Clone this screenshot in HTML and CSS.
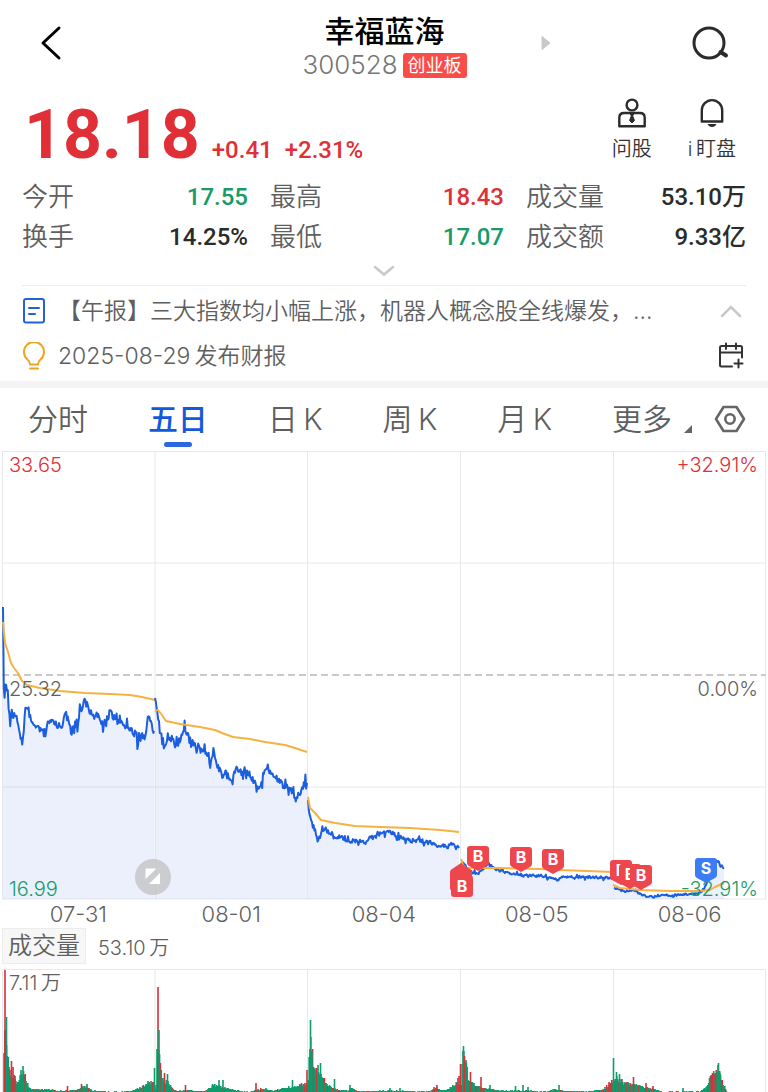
FILE: index.html
```html
<!DOCTYPE html>
<html lang="zh-CN">
  <head>
    <meta charset="UTF-8" />
    <meta name="viewport" content="width=device-width, initial-scale=1.0" />
    <title>幸福蓝海 300528</title>
    <link rel="stylesheet" href="styles.css">
  </head>
  <body>
    <header class="header">
      <button class="icon-btn" aria-label="返回">
        <svg width="22" height="36" viewBox="0 0 22 36"><path d="M19 3 3 18l16 15" fill="none" stroke="#000" stroke-width="3" stroke-linecap="round" stroke-linejoin="round"/></svg>
      </button>
      <div class="stock">
        <h1 class="stock__name">幸福蓝海</h1>
        <div class="stock__code">300528<span class="stock__board">创业板</span></div>
      </div>
      <div class="header__right">
        <button class="icon-btn" aria-label="下一只">
          <svg width="10" height="16" viewBox="0 0 10 16"><path d="M1 1.500 9 8l-8 6.500z" fill="#c8c8c8" stroke="#c8c8c8" stroke-linejoin="round"/></svg>
        </button>
        <button class="icon-btn" aria-label="搜索">
          <svg width="38" height="36" viewBox="0 0 38 36"><circle cx="18" cy="18" r="15" fill="none" stroke="#2b2b2b" stroke-width="3"/><path d="m29.500 27 5.500 3.500" stroke="#2b2b2b" stroke-width="4" stroke-linecap="round"/></svg>
        </button>
      </div>
    </header>

    <section class="quote">
      <div class="quote__price">
        <span class="quote__now">18.18</span>
        <span class="quote__change">+0.41</span>
        <span class="quote__change">+2.31%</span>
      </div>
      <div class="quote__actions">
        <button class="action">
          <svg width="30" height="32" viewBox="0 0 30 32" fill="none" stroke="#2b2b2b" stroke-width="2.400"><circle cx="15" cy="8" r="5.400"/><path d="M2.300 29.200v-8.500q0-4.700 4.700-4.700h16q4.700 0 4.700 4.700v8.500z" stroke-linejoin="round"/><path d="M13.500 17h3l-.8 2 1.800 4.500-2.500 2.500-2.500-2.500 1.800-4.500z" fill="#2b2b2b" stroke-width="1"/></svg>
          问股
        </button>
        <button class="action">
          <svg width="30" height="32" viewBox="0 0 30 32" fill="none" stroke="#2b2b2b" stroke-width="2.400"><path d="M4.800 24.500V13.300a10.200 10.200 0 0 1 20.400 0v11.200z" stroke-linejoin="round"/><path d="M10.500 27h9q-1.500 3-4.500 3t-4.500-3z" fill="#2b2b2b" stroke="none"/></svg>
          i&thinsp;盯盘
        </button>
      </div>
    </section>

    <dl class="stats">
      <div class="stat"><dt>今开</dt><dd class="down">17.55</dd></div>
      <div class="stat"><dt>最高</dt><dd class="up">18.43</dd></div>
      <div class="stat"><dt>成交量</dt><dd>53.10万</dd></div>
      <div class="stat"><dt>换手</dt><dd>14.25%</dd></div>
      <div class="stat"><dt>最低</dt><dd class="down">17.07</dd></div>
      <div class="stat"><dt>成交额</dt><dd>9.33亿</dd></div>
    </dl>
    <button class="icon-btn expand" aria-label="展开">
      <svg width="22" height="12" viewBox="0 0 22 12"><path d="m2 2 9 7.500L20 2" fill="none" stroke="#c8c8c8" stroke-width="2.500" stroke-linecap="round"/></svg>
    </button>

    <section class="news">
      <div class="news__row">
        <svg width="24" height="28" viewBox="0 0 24 28" fill="none" stroke="#2461d9" stroke-width="2"><rect x="2" y="2" width="20" height="23.500" rx="2"/><path d="M7 11h10M7 17h6" stroke-linecap="round"/></svg>
        <a class="news__text" href="#">【午报】三大指数均小幅上涨，机器人概念股全线爆发，…</a>
        <button class="icon-btn" aria-label="收起">
          <svg width="24" height="14" viewBox="0 0 24 14"><path d="m3 12 9-9 9 9" fill="none" stroke="#c8c8c8" stroke-width="2.500" stroke-linecap="round"/></svg>
        </button>
      </div>
      <div class="news__row">
        <svg width="24" height="28" viewBox="0 0 24 28" fill="none" stroke="#f0a520" stroke-width="2"><path d="M8 22.500q0-3-2.500-5a10 10 0 1 1 13 0q-2.500 2-2.500 5z" stroke-linejoin="round"/><path d="M8 26.500h8" stroke-linecap="round"/></svg>
        <a class="news__text" href="#">2025-08-29&thinsp;发布财报</a>
        <button class="icon-btn" aria-label="加入日历">
          <svg width="26" height="28" viewBox="0 0 26 28" fill="none" stroke="#333" stroke-width="2" stroke-linecap="round"><path d="M14 24.500H3.500q-1.500 0-1.500-1.500V5.500Q2 4 3.500 4h19Q24 4 24 5.500v10M2 10.500h22M8 1.500V7M18 1.500V7M20.500 17.500v8M16.500 21.500h8"/></svg>
        </button>
      </div>
    </section>

    <nav class="tabs">
      <button class="tab">分时</button>
      <button class="tab tab--active">五日</button>
      <button class="tab">日&thinsp;K</button>
      <button class="tab">周&thinsp;K</button>
      <button class="tab">月&thinsp;K</button>
      <div class="tabs__more">
        <button class="tab">更多</button>
        <svg class="tabs__corner" width="8" height="8" viewBox="0 0 8 8"><path d="M8 0v8H0z" fill="#666"/></svg>
        <button class="icon-btn" aria-label="设置">
          <svg width="32" height="30" viewBox="0 0 32 30" fill="none" stroke="#666" stroke-width="2.600"><path d="M9.500 3h13L30 15l-7.500 12h-13L2 15z" stroke-linejoin="round"/><circle cx="16" cy="15" r="4.700"/></svg>
        </button>
      </div>
    </nav>

    <main>
      <svg class="chart" viewBox="0 0 768 450">
        <g class="grid">
          <path d="M2.500 1.500h763v447.500H2.500zM155 1v448M307.500 1v448M460.500 1v448M613.500 1v448M2 113h764M2 337h764"/>
        </g>
        <path class="zero" d="M2 225h764"/>
        <g id="priceLines"></g>
        <g class="axis">
          <text class="up" x="9" y="22">33.65</text>
          <text x="9" y="246">25.32</text>
          <text class="down" x="9" y="446">16.99</text>
          <text class="up" x="758" y="22" text-anchor="end">+32.91%</text>
          <text x="758" y="246" text-anchor="end">0.00%</text>
          <text class="down" x="758" y="446" text-anchor="end">-32.91%</text>
        </g>
        <g>
          <circle cx="153" cy="427" r="18" fill="#bdbdbd" fill-opacity=".7"/>
          <path d="M145.500 418.500h11l-11 10.500zM160 423v11h-11z" fill="#fff"/>
        </g>
        <g id="marks" class="marks"></g>
      </svg>
      <div class="dates">
        <span>07-31</span>
        <span>08-01</span>
        <span>08-04</span>
        <span>08-05</span>
        <span>08-06</span>
      </div>
      <div class="volume-head">
        <button class="volume-head__btn">成交量</button>
        <span>53.10&thinsp;万</span>
      </div>
      <svg class="chart" viewBox="0 0 768 124">
        <g class="grid">
          <path d="M2.500 124V1.500h763V124M155 1v123M307.500 1v123M460.500 1v123M613.500 1v123"/>
        </g>
        <g id="volumeBars"></g>
        <g class="axis"><text x="9" y="22">7.11&thinsp;万</text></g>
      </svg>
    </main>
    <script src="chart.js"></script>
  </body>
</html>
```
FILE: styles.css
```css
* {
  box-sizing: border-box;
}

body {
  margin: 0;
  background: #fff;
  color: #5f5f5f;
  font-family: Inter, "Noto Sans CJK SC", sans-serif;
  font-weight: 350;
}

button {
  margin: 0;
  padding: 0;
  border: none;
  background: none;
  color: inherit;
  font: inherit;
  cursor: pointer;
}

svg {
  display: block;
  flex: none;
}

a {
  color: inherit;
  text-decoration: none;
}

.up {
  color: #dd3038;
  fill: #dd3038;
}

.down {
  color: #169c68;
  fill: #169c68;
}

/* header */
.header {
  display: grid;
  grid-template-columns: 1fr auto 1fr;
  align-items: center;
  padding: 13px 39px 0 40px;
}

.header > .icon-btn {
  justify-self: start;
}

.header__right {
  display: flex;
  align-items: center;
  justify-content: space-between;
  padding-left: 74px;
}

.icon-btn {
  display: flex;
  align-items: center;
  justify-content: center;
}

.header .icon-btn {
  margin-bottom: 8px;
}

.stock {
  text-align: center;
}

.stock__name {
  margin: 0;
  color: #000;
  font-size: 30px;
  font-weight: 500;
  line-height: 36px;
}

.stock__code {
  display: flex;
  align-items: center;
  justify-content: center;
  gap: 5px;
  color: #777;
  font-size: 26px;
  line-height: 32px;
}

.stock__board {
  padding: 0 5px;
  border-radius: 3px;
  background: #fb4d48;
  color: #fff;
  font-size: 18px;
  font-weight: 400;
  line-height: 25px;
}

/* price */
.quote {
  display: flex;
  justify-content: space-between;
  height: 96px;
  padding: 10px 32px 0 24px;
}

.quote__price {
  display: flex;
  align-items: baseline;
  gap: 12px;
  color: #e02f36;
  font-family: Roboto, sans-serif;
  font-weight: 500;
}

.quote__now {
  font-size: 68px;
  font-weight: 700;
  line-height: 88px;
}

.quote__change {
  font-size: 24px;
}

.quote__actions {
  display: flex;
  align-items: flex-start;
  gap: 36px;
  padding-top: 6px;
}

.action {
  display: flex;
  flex-direction: column;
  align-items: center;
  gap: 6px;
  color: #333;
  font-size: 20px;
  line-height: 28px;
}

/* stats */
.stats {
  display: grid;
  grid-template-columns: 226fr 234fr 220fr;
  column-gap: 22px;
  margin: 0;
  padding: 0 22px;
}

.stat {
  display: flex;
  justify-content: space-between;
  font-size: 26px;
  line-height: 40px;
}

.stat dd {
  margin: 0;
  font-family: Roboto, "Noto Sans CJK SC", sans-serif;
  font-size: 24px;
  font-weight: 500;
}

.stat dd:not([class]) {
  color: #2b2b2b;
}

.expand {
  width: 100%;
  height: 28px;
}

/* news */
.news {
  padding: 0 22px 3px;
  border-bottom: 7px solid #f4f4f4;
}

.news::before {
  content: "";
  display: block;
  margin-bottom: 2px;
  border-top: 1px solid #ededed;
}

.news__row {
  display: flex;
  align-items: center;
  gap: 12px;
  height: 45px;
  font-size: 23px;
}

.news__text {
  flex: 1;
  overflow: hidden;
  line-height: 36px;
  white-space: nowrap;
}

.news__row .icon-btn {
  width: 30px;
}

/* period tabs */
.tabs {
  display: flex;
  align-items: center;
  justify-content: space-between;
  height: 62px;
  padding: 0 22px 0 28px;
  font-size: 30px;
}

.tab {
  position: relative;
  line-height: 62px;
}

.tab--active {
  color: #1459dc;
  font-weight: 500;
}

.tab--active::after {
  content: "";
  position: absolute;
  bottom: 3px;
  left: 50%;
  width: 28px;
  height: 5px;
  margin-left: -14px;
  border-radius: 3px;
  background: #2b68e2;
}

.tabs__more {
  display: flex;
  align-items: center;
}

.tabs__corner {
  margin: 20px 22px 0 12px;
}

/* charts */
.chart {
  width: 100%;
  height: auto;
}

.grid path {
  fill: none;
  stroke: #e8e8e8;
}

.zero {
  stroke: #c9c9c9;
  stroke-width: 2;
  stroke-dasharray: 7 4;
}

.axis {
  fill: #5f5f5f;
  font-size: 20px;
}

.area {
  fill: #3e6fe0;
  fill-opacity: 0.1;
}

.line,
.average {
  fill: none;
  stroke-width: 2;
  stroke-linejoin: round;
}

.line {
  stroke: #1c5ee0;
}

.average {
  stroke: #f7b042;
}

.marks text {
  fill: #fff;
  font-size: 16px;
  font-weight: 700;
  text-anchor: middle;
}

.dates {
  display: grid;
  grid-template-columns: repeat(5, 1fr);
  padding: 0 2px;
  font-size: 22px;
  line-height: 28px;
  text-align: center;
}

.volume-head {
  display: flex;
  align-items: center;
  gap: 12px;
  padding: 0 2px 4px;
  font-size: 20px;
}

.volume-head__btn {
  padding: 0 5px;
  border: 1px solid #ececec;
  background: #f7f7f7;
  font-size: 24px;
  line-height: 34px;
}
```
FILE: chart.js
```js
// one entry per trading day: anchor points [x, y] and how rough the line is
const days = [
  {
    rough: 9,
    price: [[3,157],[4,258],[5,236],[7,234],[8,250],[10,270],[12,266],[16,264],[18,275],[20,287],[23,290],[25,262],[26,256],[28,263],[31,268],[34,276],[38,278],[42,278],[45,287],[48,274],[52,268],[57,274],[60,277],[63,272],[65,260],[67,267],[72,277],[78,276],[80,254],[82,262],[84,246],[87,254],[90,263],[97,265],[100,271],[103,273],[108,267],[111,258],[113,267],[118,271],[122,275],[127,275],[131,280],[135,283],[138,292],[142,285],[145,291],[147,272],[149,265],[151,273],[154,281]],
    average: [[3,172],[5,193],[8,202],[11,213],[14,218],[18,223],[22,231],[27,235],[40,238],[60,241],[85,243],[110,244],[130,245],[142,247],[155,250]],
  },
  {
    rough: 9,
    price: [[155,248],[157,264],[160,277],[162,287],[165,300],[168,288],[172,290],[176,293],[180,290],[183,280],[185,277],[189,287],[192,292],[196,296],[200,298],[205,302],[210,311],[214,306],[218,316],[222,325],[225,322],[229,330],[232,330],[235,322],[237,320],[240,323],[245,320],[250,325],[255,333],[259,337],[262,330],[265,318],[267,315],[270,322],[275,328],[280,330],[284,337],[290,339],[293,345],[296,349],[300,342],[304,333],[307,333]],
    average: [[155,261],[158,260],[162,265],[166,271],[180,274],[200,277],[215,280],[222,283],[233,287],[250,289],[265,292],[285,295],[295,298],[307,302]],
  },
  {
    rough: 5,
    price: [[308,350],[309,362],[312,373],[315,380],[318,392],[321,383],[325,378],[328,382],[333,386],[340,387],[348,391],[356,391],[366,392],[371,386],[376,386],[382,383],[388,382],[393,383],[397,388],[403,387],[410,391],[418,390],[425,392],[433,393],[437,397],[443,396],[448,397],[452,394],[455,397],[459,398]],
    average: [[308,347],[310,358],[315,363],[321,370],[335,373],[355,376],[380,377],[410,378],[440,380],[459,382]],
  },
  {
    rough: 3,
    price: [[461,415],[465,413],[467,420],[472,422],[478,424],[484,418],[489,413],[493,418],[498,420],[505,422],[512,423],[522,426],[530,426],[540,426],[548,427],[558,430],[562,426],[570,427],[585,427],[613,428]],
    average: [[461,409],[463,415],[466,418],[500,418],[540,419],[560,420],[613,422]],
  },
  {
    rough: 2,
    price: [[614,438],[620,439],[625,442],[632,440],[637,442],[642,445],[653,447],[663,445],[673,446],[685,444],[697,444],[704,440],[708,430],[712,418],[716,410],[718,411],[721,416],[724,418]],
    average: [[613,435],[620,438],[640,440],[670,441],[700,441],[710,440],[715,437],[724,433]],
  },
];

// small fixed-seed generator, the chart is the same on every load
let seed = 20250806;
function random() {
  seed = (seed * 1664525 + 1013904223) % 4294967296;
  return seed / 4294967296;
}

function valueAt(points, x) {
  let i = 1;
  while (i < points.length - 1 && points[i][0] < x) i++;
  const [x1, y1] = points[i - 1];
  const [x2, y2] = points[i];
  return y1 + ((y2 - y1) * (x - x1)) / (x2 - x1);
}

const toPath = (points) => "M" + points.map((p) => p[0].toFixed(1) + " " + p[1].toFixed(1)).join("L");

let lines = "";
days.forEach((day) => {
  const first = day.price[0][0];
  const last = day.price[day.price.length - 1][0];
  const points = [day.price[0]];
  for (let x = first + 0.8; x < last; x += 0.8) {
    const spike = random() > 0.8 ? 2 : 0.8;
    points.push([x, valueAt(day.price, x) + (random() - 0.5) * day.rough * spike]);
  }
  points.push(day.price[day.price.length - 1]);
  lines += `<path class="area" d="${toPath(points)}V449H${first}z"/>`;
  lines += `<path class="line" d="${toPath(points)}"/>`;
  lines += `<path class="average" d="${toPath(day.average)}"/>`;
});
document.getElementById("priceLines").innerHTML = lines;

// buy and sell flags: x, top, letter, points up
const marks = [
  [461, 415, "", true],
  [462, 421, "B", true],
  [478, 396, "B"],
  [521, 397, "B"],
  [553, 399, "B"],
  [621, 410, "B"],
  [630, 414, "B"],
  [641, 415, "B"],
  [706, 408, "S"],
];
document.getElementById("marks").innerHTML = marks
  .map(([x, y, letter, up]) => {
    const shape = up
      ? "M0 -2 9 4q2 1 2 3v16q0 3-3 3H-8q-3 0-3-3V7q0-2 2-3z"
      : "M-8 0H8q3 0 3 3v14q0 2-2 3L0 25-9 20q-2-1-2-3V3q0-3 3-3z";
    const color = letter === "S" ? "#3c7df5" : "#ed474d";
    return `<g transform="translate(${x} ${y})"><path d="${shape}" fill="${color}"/><text y="${up ? 21 : 16}">${letter}</text></g>`;
  })
  .join("");

// volume: outline of bar heights, then single bars that stand out
const outline = [[4,40],[6,75],[8,37],[10,18],[15,14],[18,8],[23,22],[27,9],[31,2],[55,2],[57,0],[65,1],[70,1],[78,2],[86,5],[92,1],[110,0],[130,0],[140,4],[149,8],[154,10],[156,0],[157,36],[159,60],[161,22],[164,12],[169,8],[174,1],[190,1],[205,0],[213,6],[220,5],[228,3],[237,1],[250,0],[262,3],[270,1],[283,3],[294,5],[306,8],[308,4],[309,42],[311,70],[313,30],[317,20],[321,18],[326,8],[336,2],[348,1],[352,4],[358,0],[388,1],[430,0],[436,4],[442,1],[450,3],[458,12],[461,0],[463,42],[466,30],[469,9],[473,8],[481,4],[490,3],[500,1],[525,1],[545,0],[555,2],[563,1],[585,0],[603,2],[612,10],[615,12],[618,14],[624,9],[632,8],[642,5],[652,3],[662,0],[680,0],[700,0],[706,4],[712,17],[718,22],[722,12],[726,2],[727,0],[768,0]];
const peaks = [[5,122,1],[6.5,75,0],[11.500,31,1],[13,25,1],[15,16,1],[21,22,0],[23,26,0],[67.500,6,1],[81.500,8,1],[87,8,0],[140,5,0],[148,11,0],[154.500,24,0],[158,105,1],[159,62,0],[164.500,19,1],[167.500,18,0],[185.500,7,1],[212.500,8,0],[219,12,0],[223,12,0],[256,9,1],[266,4,0],[292.500,12,0],[307,22,1],[310.500,72,0],[312,40,0],[315,24,0],[318,27,0],[320.500,29,0],[334.500,13,0],[350,7,0],[390,4,0],[400,4,0],[434,5,1],[437,7,1],[459,16,1],[460.500,28,1],[463.500,46,0],[464.500,36,1],[466,32,0],[470.500,20,1],[481,15,1],[490,7,0],[515.500,6,0],[523,7,0],[528,5,0],[559,7,0],[609,10,1],[613.500,34,0],[616.500,20,0],[619.500,18,0],[625,10,0],[633.500,15,1],[646,9,1],[653,6,1],[683,4,0],[712.500,19,1],[718.500,29,0],[720,19,0]];

const bar = (x, height, red) =>
  `<rect x="${x - 0.8}" y="${124 - height}" width="1.6" height="${height}" fill="${red ? "#d8303a" : "#0f9b6c"}"/>`;

let bars = "";
for (let x = 4; x < 728; x += 0.85) {
  const height = Math.round(valueAt(outline, x) * (0.7 + random() * 0.5) + random() * 1.1 - 0.1);
  if (height > 0) bars += bar(x, height, random() > 0.82);
}
peaks.forEach(([x, height, red]) => (bars += bar(x, height, red)));
document.getElementById("volumeBars").innerHTML = bars;
```
